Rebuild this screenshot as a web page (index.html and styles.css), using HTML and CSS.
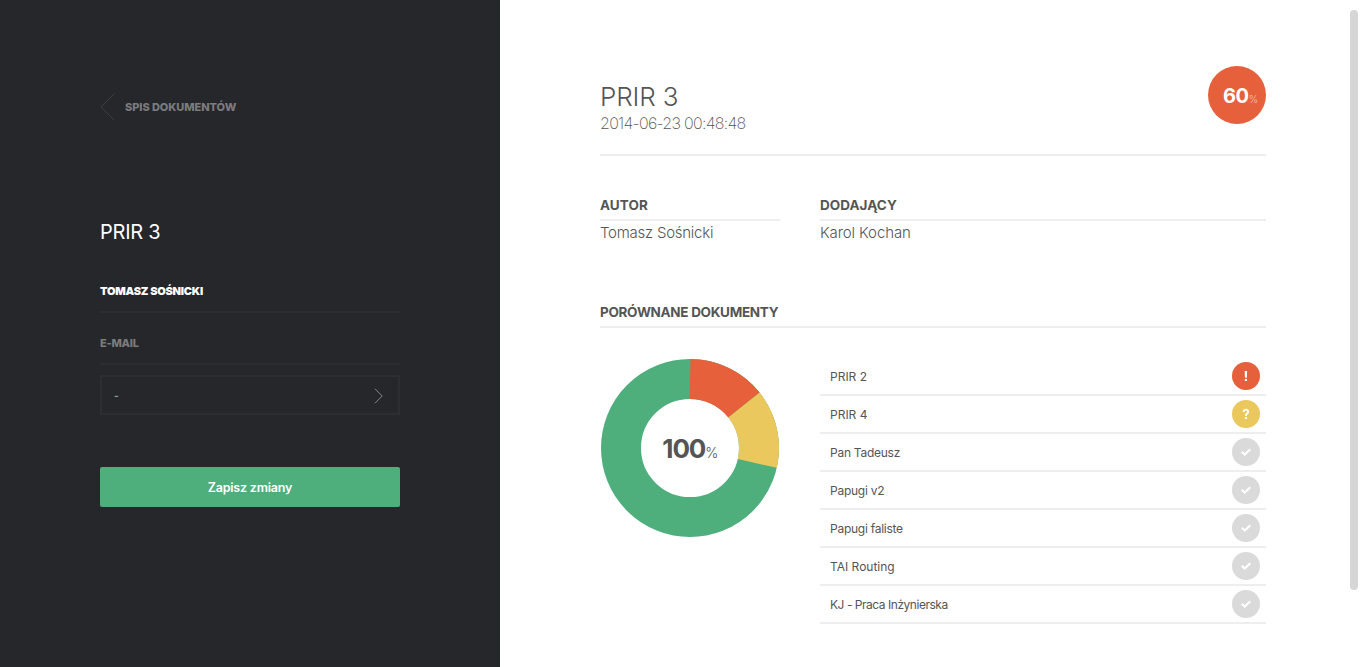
FILE: index.html
```html
<!DOCTYPE html>
<html lang="pl">
<head>
<meta charset="utf-8">
<title>PRIR 3</title>
<link rel="stylesheet" href="styles.css">
</head>
<body>
<div class="app">
  <aside class="sidebar">
    <a class="back">
      <svg class="back-icon" width="16" height="28" viewBox="0 0 16 28"><path d="M14.500 .5L1 14L14.500 27.500" /></svg>
      <span>SPIS DOKUMENTÓW</span>
    </a>
    <h2 class="side-title">PRIR 3</h2>
    <div class="field field-name">TOMASZ SOŚNICKI</div>
    <div class="field field-mail">E-MAIL</div>
    <div class="select">
      <span class="select-value">-</span>
      <svg class="select-icon" width="10" height="16" viewBox="0 0 10 16"><path d="M1 .8L8.200 8L1 15.200" /></svg>
    </div>
    <button class="save" type="button">Zapisz zmiany</button>
  </aside>
  <main class="main">
    <header class="head">
      <div>
        <h1 class="title">PRIR 3</h1>
        <div class="date">2014-06-23 00:48:48</div>
      </div>
      <div class="score"><b>60</b><span>%</span></div>
    </header>
    <section class="people">
      <div>
        <h3 class="label label-author">AUTOR</h3>
        <p class="person person-author">Tomasz Sośnicki</p>
      </div>
      <div>
        <h3 class="label label-adder">DODAJĄCY</h3>
        <p class="person person-adder">Karol Kochan</p>
      </div>
    </section>
    <h3 class="label label-docs">PORÓWNANE DOKUMENTY</h3>
    <section class="compare">
      <div class="chart">
        <svg width="180" height="180" viewBox="-90 -90 180 180">
          <circle r="69" fill="none" stroke="#4eaf7d" stroke-width="40"/>
          <path fill="#e5603b" d="M.5-89A89 89 0 0 1 69.600-55.500L38.300-30.600A49 49 0 0 0-.5-49Z"/>
          <path fill="#ebc85e" d="M69.600-55.500A89 89 0 0 1 86.800 19.800L47.800 10.900A49 49 0 0 0 38.300-30.600Z"/>
        </svg>
        <div class="chart-value"><b>100</b><span>%</span></div>
      </div>
      <ul class="docs">
        <li class="doc"><span>PRIR 2</span><i class="badge red"><svg width="28" height="28" viewBox="0 0 28 28"><path d="M12.700 9H15.100L14.900 15.700H12.900ZM12.800 17H15V19H12.800Z"/></svg></i></li>
        <li class="doc"><span>PRIR 4</span><i class="badge yellow"><svg width="28" height="28" viewBox="0 0 28 28"><path class="line" d="M11.700 12.100C11.700 9.100 16.200 9.100 16.200 11.800C16.200 13.700 13.900 13.500 13.900 16"/><path d="M12.900 17H15V19H12.900Z"/></svg></i></li>
        <li class="doc"><span class="name-mid">Pan Tadeusz</span><i class="badge"><svg width="28" height="28" viewBox="0 0 28 28"><path class="line check" d="M9.800 13.700L12.700 16.500L18.300 11.200"/></svg></i></li>
        <li class="doc"><span class="name-mid">Papugi v2</span><i class="badge"><svg width="28" height="28" viewBox="0 0 28 28"><path class="line check" d="M9.800 13.700L12.700 16.500L18.300 11.200"/></svg></i></li>
        <li class="doc"><span class="name-mid">Papugi faliste</span><i class="badge"><svg width="28" height="28" viewBox="0 0 28 28"><path class="line check" d="M9.800 13.700L12.700 16.500L18.300 11.200"/></svg></i></li>
        <li class="doc"><span>TAI Routing</span><i class="badge"><svg width="28" height="28" viewBox="0 0 28 28"><path class="line check" d="M9.800 13.700L12.700 16.500L18.300 11.200"/></svg></i></li>
        <li class="doc"><span class="name-long">KJ - Praca Inżynierska</span><i class="badge"><svg width="28" height="28" viewBox="0 0 28 28"><path class="line check" d="M9.800 13.700L12.700 16.500L18.300 11.200"/></svg></i></li>
      </ul>
    </section>
  </main>
  <div class="scroll"><div class="thumb"></div></div>
</div>
</body>
</html>
```
FILE: styles.css
```css
* { box-sizing: border-box; }
body { margin: 0; font-family: Inter, "Liberation Sans", sans-serif; color: #555; background: #fff; }
h1, h2, h3, p, ul { margin: 0; padding: 0; font-weight: 400; }
svg { display: block; }
.app { display: flex; height: 667px; overflow: hidden; }

.sidebar { flex: none; width: 500px; padding: 93px 100px 0; background: #26272b; }
.back { display: flex; align-items: center; gap: 9px; height: 28px; font-size: 11px; font-weight: 800; letter-spacing: -.06px; color: #7b7b7d; white-space: nowrap; }
.back-icon { stroke: #3c3d41; fill: none; }
.side-title { margin-top: 97px; font-size: 20px; line-height: 28px; letter-spacing: -.25px; color: #fff; }
.field { height: 52px; font-size: 11px; font-weight: 800; line-height: 18px; letter-spacing: -.25px; color: #7b7b7d; border-bottom: 2px solid #2d2e32; padding-top: 21px; }
.field-name { margin-top: 15px; color: #fff; font-weight: 900; letter-spacing: -.24px; }
.select { display: flex; align-items: center; justify-content: space-between; height: 40px; margin-top: 10px; padding: 0 14px 0 12px; border: 2px solid #2d2e32; font-size: 10px; font-weight: 700; color: #9a9a9d; }
.select-value { line-height: 14px; padding-bottom: 1px; }
.select-icon { stroke: #85858a; fill: none; position: relative; top: 1px; }
.save { display: block; width: 300px; height: 40px; margin-top: 52px; padding: 0; border: 0; border-radius: 2px; background: #4eaf7d; color: #fff; font: 600 12.5px/41px Inter, sans-serif; letter-spacing: -.2px; }

.main { flex: none; width: 850px; padding: 66px 84px 0 100px; }
.head { display: flex; justify-content: space-between; height: 90px; border-bottom: 2px solid #eee; }
.title { margin-top: 14px; font-size: 26px; line-height: 33px; font-weight: 300; letter-spacing: -.15px; }
.date { font-size: 16px; line-height: 20px; font-weight: 250; letter-spacing: -.72px; }
.score { display: flex; align-items: baseline; justify-content: center; width: 58px; height: 58px; border-radius: 50%; background: #e5603b; color: #fff; line-height: 60px; padding-left: 6px; }
.score b { font-size: 20px; font-weight: 700; letter-spacing: -.4px; }
.score span { font-size: 10px; font-weight: 300; letter-spacing: -1px; opacity: .6; }
.people { display: grid; grid-template-columns: 180px 446px; gap: 40px; margin-top: 39px; height: 107px; }
.label { height: 26px; font-size: 13.5px; line-height: 21px; font-weight: 650; letter-spacing: .05px; border-bottom: 2px solid #eee; }
.label-docs { letter-spacing: -.3px; }
.person { font-size: 15px; line-height: 24px; font-weight: 270; letter-spacing: -.1px; }
.person-author { letter-spacing: -.25px; }
.compare { display: grid; grid-template-columns: 180px 446px; gap: 40px; margin-top: 30px; }
.chart { display: grid; height: 180px; }
.chart > * { grid-area: 1 / 1; }
.chart-value { display: flex; align-items: baseline; justify-content: center; line-height: 181px; }
.chart-value b { font-size: 26px; font-weight: 700; letter-spacing: -1.1px; }
.chart-value span { font-size: 14px; font-weight: 300; letter-spacing: -.7px; }
.docs { list-style: none; }
.doc { display: flex; align-items: center; justify-content: space-between; height: 38px; padding: 0 6px 0 10px; border-bottom: 2px solid #eee; font-size: 12px; }
.name-mid { letter-spacing: -.26px; }
.name-long { letter-spacing: -.47px; }
.badge { width: 28px; height: 28px; border-radius: 50%; background: #dadada; }
.badge svg { fill: #fff; }
.badge .line { fill: none; stroke: #fff; stroke-width: 2; }
.badge .check { stroke-width: 2.2; }
.red { background: #e5603b; }
.yellow { background: #ebc85e; }

.scroll { flex: none; width: 8px; padding-top: 10px; }
.thumb { height: 580px; border-radius: 4px; background: #d6d6d6; }
```
